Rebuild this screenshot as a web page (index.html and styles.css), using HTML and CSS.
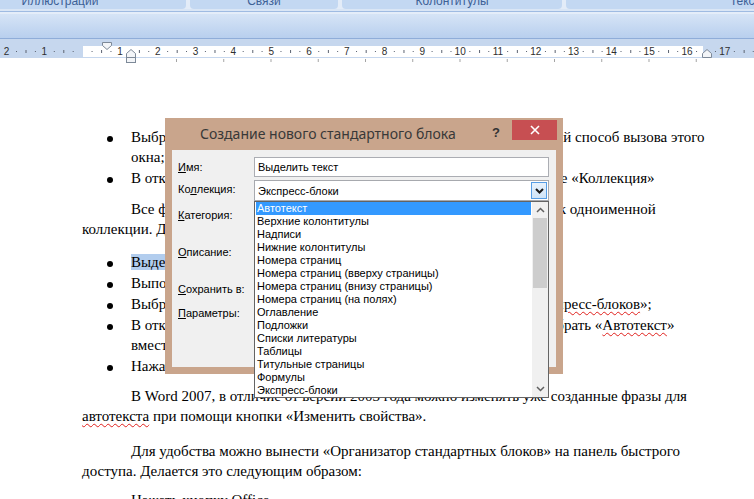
FILE: index.html
```html
<!DOCTYPE html>
<html lang="ru">
<head>
<meta charset="utf-8">
<title>Word 2007 — Создание нового стандартного блока</title>
<link rel="stylesheet" href="styles.css">
</head>
<body>
<div class="window">
  <header class="ribbon">
    <div class="groups">
      <div class="grp g1"><span>Иллюстрации</span></div>
      <div class="grp g2"><span>Связи</span></div>
      <div class="grp g3"><span>Колонтитулы</span></div>
      <div class="grp g4"><span>Текст</span></div>
    </div>
    <div class="rule"></div>
    <div class="panel"></div>
    <div class="ruler">
      <div class="strip"></div>
      <div class="marks"></div>
      <div class="nums">
        <span>2</span><span>1</span><span></span><span>1</span><span>2</span><span>3</span><span>4</span><span>5</span><span>6</span><span>7</span><span>8</span><span>9</span><span>10</span><span>11</span><span>12</span><span>13</span><span>14</span><span>15</span><span>16</span><span>17</span><span>18</span>
      </div>
      <svg class="indents" width="754" height="25" viewBox="0 0 754 25">
        <polygon points="102.5,3.5 111.5,3.5 111.5,6.5 107,10.5 102.5,6.5" fill="#f3f5f8" stroke="#7d8998"/>
        <polygon points="126.5,18.5 126.5,14.5 131,10.5 135.5,14.5 135.5,18.5" fill="#f3f5f8" stroke="#7d8998"/>
        <rect x="126.5" y="18.5" width="9" height="5" fill="#f3f5f8" stroke="#7d8998"/>
        <polygon points="702.5,18.5 702.5,14.5 707,10.5 711.5,14.5 711.5,18.5" fill="#f3f5f8" stroke="#7d8998"/>
      </svg>
    </div>
    <div class="tabstops"><div class="stops"></div></div>
  </header>

  <main class="page">
    <ul class="list first">
      <li>Выбрать «Сохранить фрагмент» или нажать Alt+F3 – более быстрый способ вызова этого<br>окна;</li>
      <li>В открывшемся окне выбрать элемент «Автотекст» из списка в поле «Коллекция»</li>
    </ul>
    <p class="para p1">Все фрагменты, сохранённые этим способом, будут принадлежать к одноименной<br>коллекции. Для этого необходимо:</p>
    <ul class="list second">
      <li><mark>Выделить текст</mark>, который нужно сохранить;</li>
      <li>Выполнить команду «Вставка»;</li>
      <li>Выбрать пункт «Сохранить выбранный фрагмент в коллекцию <span class="sp">экспресс-блоков</span>»;</li>
      <li>В открывшемся окне в списке «Коллекция» теперь необходимо выбрать «<span class="sp">Автотекст</span>»<br>вместо «Экспресс-блоки»;</li>
      <li>Нажать «ОК».</li>
    </ul>
    <p class="para p2">В Word 2007, в отличие от версии 2003 года можно изменять уже созданные фразы для<br><span class="sp">автотекста</span> при помощи кнопки «Изменить свойства».</p>
    <p class="para p3">Для удобства можно вынести «Организатор стандартных блоков» на панель быстрого<br>доступа. Делается это следующим образом:</p>
    <p class="para p4">Нажать кнопку Office.</p>
  </main>

  <section class="dialog">
    <div class="titlebar">
      <span class="title">Создание нового стандартного блока</span>
      <span class="help">?</span>
      <span class="close"><svg width="10" height="10" viewBox="0 0 10 10"><path d="M1 1L9 9M9 1L1 9" stroke="#fff" stroke-width="1.6"/></svg></span>
    </div>
    <div class="client">
      <div class="form">
        <span class="lbl"><u>И</u>мя:</span>
        <div class="field input">Выделить текст</div>
        <span class="lbl">Ко<u>л</u>лекция:</span>
        <div class="field combo">Экспресс-блоки
          <span class="dropbtn"><svg width="9" height="6" viewBox="0 0 9 6"><path d="M1 1L4.5 4.5L8 1" fill="none" stroke="#1a1a1a" stroke-width="2"/></svg></span>
        </div>
        <span class="lbl"><u>К</u>атегория:</span>
        <div></div>
        <span class="lbl"><u>О</u>писание:</span>
        <div></div>
        <span class="lbl"><u>С</u>охранить в:</span>
        <div></div>
        <span class="lbl"><u>П</u>араметры:</span>
        <div></div>
      </div>
    </div>

    <div class="listbox">
      <ul class="items">
        <li class="sel">Автотекст</li>
        <li>Верхние колонтитулы</li>
        <li>Надписи</li>
        <li>Нижние колонтитулы</li>
        <li>Номера страниц</li>
        <li>Номера страниц (вверху страницы)</li>
        <li>Номера страниц (внизу страницы)</li>
        <li>Номера страниц (на полях)</li>
        <li>Оглавление</li>
        <li>Подложки</li>
        <li>Списки литературы</li>
        <li>Таблицы</li>
        <li>Титульные страницы</li>
        <li>Формулы</li>
        <li>Экспресс-блоки</li>
      </ul>
      <div class="scrollbar">
        <span class="sbtn"><svg width="9" height="6" viewBox="0 0 9 6"><path d="M1 5L4.5 1.5L8 5" fill="none" stroke="#606060" stroke-width="1.5"/></svg></span>
        <span class="thumb"></span>
        <span class="track"></span>
        <span class="sbtn"><svg width="9" height="6" viewBox="0 0 9 6"><path d="M1 1L4.5 4.5L8 1" fill="none" stroke="#606060" stroke-width="1.5"/></svg></span>
      </div>
    </div>
  </section>
</div>
</body>
</html>
```

FILE: styles.css
```css
* { box-sizing: border-box; }
html, body { margin: 0; padding: 0; }
body {
  width: 754px;
  height: 499px;
  overflow: hidden;
  background: #fff;
  font-family: "Liberation Serif", serif;
}
.window { position: relative; width: 754px; height: 499px; overflow: hidden; }

/* ribbon */
.groups {
  display: flex;
  gap: 4px;
  margin-left: -66px;
  height: 9px;
  background: #e3ecf8;
  overflow: hidden;
}
.grp {
  flex: none;
  background: #c3d8f2;
  border-radius: 0 0 4px 4px;
  text-align: center;
  font: 12px/12px "Liberation Sans", sans-serif;
  color: #3d6196;
}
.grp span { display: block; margin-top: -5px; }
.g1 { width: 252px; }
.g2 { width: 148px; }
.g3 { width: 220px; }
.g4 { width: 358px; }
.rule {
  height: 5px;
  background: linear-gradient(#dae6f5 0 2px, #9fbbe2 2px 3px, #e4edf9 3px);
}
.panel {
  height: 25px;
  background: linear-gradient(#d6e4f6, #b8cfee);
  border-bottom: 1px solid #8fadd9;
}
.ruler {
  position: relative;
  height: 19px;
  background: #c6d7ee;
  display: grid;
}
.ruler > * { grid-area: 1 / 1; }
.strip {
  margin: 7px 0 0 83px;
  width: 620px;
  height: 11px;
  background: #fff;
}
.marks {
  margin-top: 7px;
  height: 11px;
  background-image:
    linear-gradient(to right, #5b6270 0 1px, transparent 1px),
    linear-gradient(to right, #5b6270 0 1px, transparent 1px);
  background-size: 37.8px 3px, 18.9px 1px;
  background-position: 25.5px 4px, 16px 5px;
  background-repeat: repeat-x;
}
.nums {
  display: flex;
  margin: 7px 0 0 -12.3px;
  height: 11px;
  font: 10px/11px "Liberation Sans", sans-serif;
  color: #2e2e2e;
}
.nums span { flex: none; width: 37.8px; text-align: center; }
.indents { position: absolute; left: 0; top: 0; }
.tabstops { height: 5px; background: #fff; }
.stops {
  margin-left: 176px;
  width: 530px;
  height: 3px;
  margin-top: 1px;
  background-image: linear-gradient(to right, #a3a3a3 0 1px, transparent 1px);
  background-size: 47.25px 3px;
  background-repeat: repeat-x;
}

/* document */
.page {
  padding: 63px 0 0 82px;
  width: 754px;
  font: 15px/20px "Liberation Serif", serif;
  color: #000;
}
.list { list-style: none; margin: 0; padding: 0 0 0 49px; }
.list li { margin-bottom: 1px; text-indent: -24px; white-space: nowrap; }
.list li::before {
  content: "";
  display: inline-block;
  width: 6px;
  height: 6px;
  border-radius: 50%;
  background: #000;
  margin-right: 18px;
  vertical-align: middle;
}
.para { margin: 0; text-indent: 49px; white-space: nowrap; }
.p1 { margin-top: 11px; }
.second { margin-top: 13px; }
.p2 { margin-top: 10px; }
.p3 { margin-top: 15px; }
.p4 { margin-top: 9px; }
mark { background: #b2cdee; color: inherit; }
.sp {
  text-decoration: underline wavy #e0201c;
  text-decoration-thickness: 1px;
  text-underline-offset: 2px;
}

/* dialog */
.dialog {
  position: absolute;
  left: 165px;
  top: 118px;
  width: 398px;
  height: 256px;
  background: #c9a58c;
  padding: 0 7px 7px;
  display: flex;
  flex-direction: column;
  font: 11px "Liberation Sans", sans-serif;
  color: #000;
}
.titlebar { height: 32px; display: flex; align-items: flex-start; flex: none; }
.title {
  margin: 7px 0 0 28px;
  font: 14px/18px "Noto Sans", sans-serif;
  color: #383838;
}
.help {
  margin: 7px 12px 0 auto;
  font: bold 13px/16px "Liberation Sans", sans-serif;
  color: #333;
}
.close {
  width: 45px;
  height: 20px;
  margin: 2px -1px 0 0;
  background: #c74f52;
  display: flex;
  align-items: center;
  justify-content: center;
}
.client { flex: 1; background: #f0f0f0; }
.form {
  display: grid;
  grid-template-columns: 76px 295px;
  grid-template-rows: 20px 24px 27px 48px 26px 22px;
  padding: 7px 0 0 6px;
}
.lbl { align-self: center; line-height: 14px; }
.field {
  background: #fff;
  border: 1px solid #abadb3;
  padding-left: 3px;
  display: flex;
  align-items: center;
}
.combo { height: 21px; align-self: end; border-color: #a7a9ae; position: relative; }
.dropbtn {
  margin-left: auto;
  margin-right: 1px;
  width: 16px;
  height: 17px;
  background: linear-gradient(#e8f2fc, #cfe4f8);
  border: 1px solid #569de5;
  display: flex;
  align-items: center;
  justify-content: center;
}

.listbox {
  position: absolute;
  left: 89px;
  top: 83px;
  width: 295px;
  height: 197px;
  background: #fff;
  border: 1px solid #646464;
  display: flex;
}
.items {
  list-style: none;
  margin: 0;
  padding: 0;
  flex: 1;
  font: 11px/13px "Liberation Sans", sans-serif;
}
.items li { padding-left: 2px; margin-right: 1px; height: 13px; }
.items .sel { background: #3399ff; color: #fff; margin-left: 1px; padding-left: 1px; }
.scrollbar {
  width: 16px;
  display: flex;
  flex-direction: column;
  background: #f0f0f0;
}
.sbtn { height: 16px; display: flex; align-items: center; justify-content: center; flex: none; }
.thumb { height: 70px; margin: 0 1px; background: #cdcdcd; flex: none; }
.track { flex: 1; }
```
